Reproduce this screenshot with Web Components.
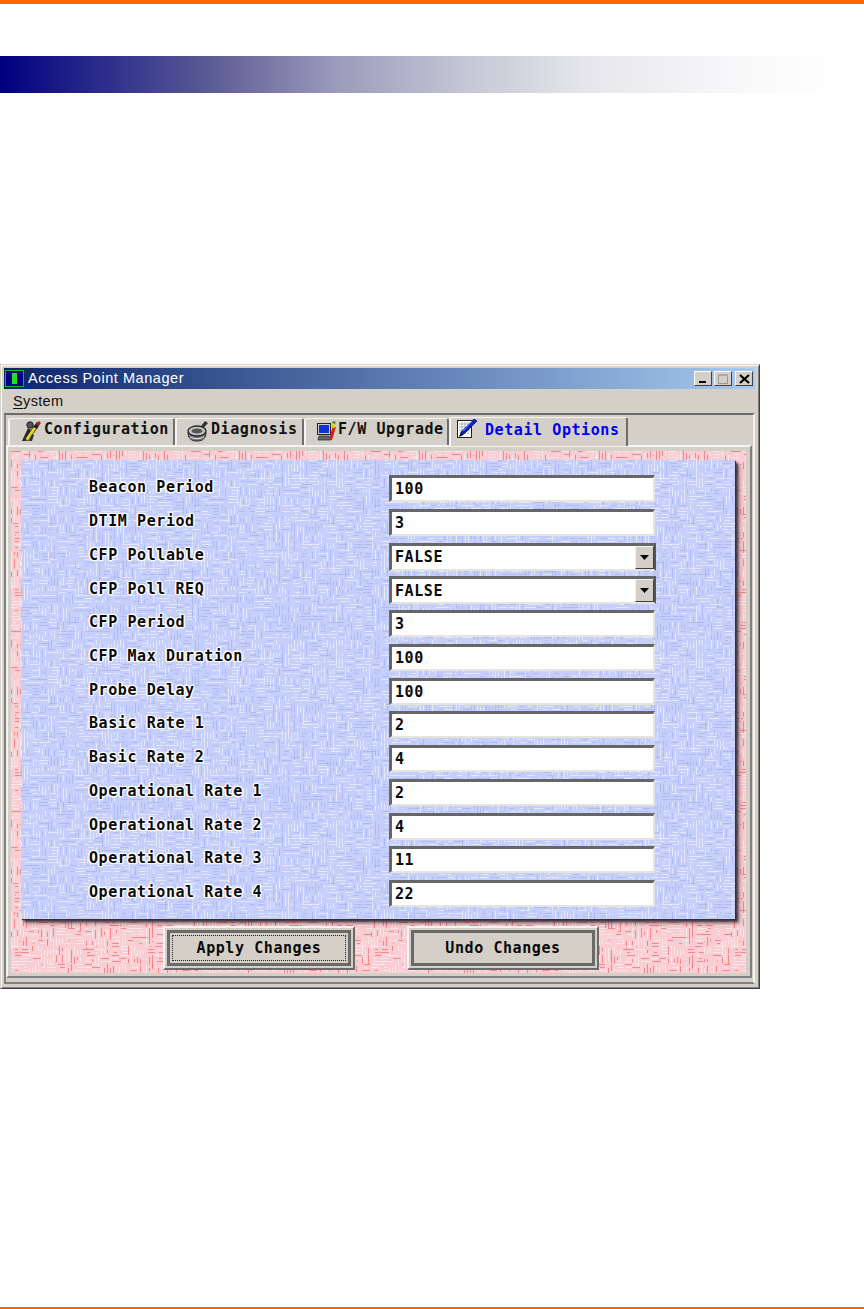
<!DOCTYPE html>
<html><head><meta charset="utf-8">
<style>
html,body{margin:0;padding:0;background:#fff}
</style></head><body>
<ap-page>
  <ap-window title="Access Point Manager">
    <ap-tab slot="tabs" icon="config" w="167">Configuration</ap-tab>
    <ap-tab slot="tabs" icon="diag" w="129">Diagnosis</ap-tab>
    <ap-tab slot="tabs" icon="fw" w="145">F/W Upgrade</ap-tab>
    <ap-tab slot="tabs" icon="detail" w="179" active>Detail Options</ap-tab>
    <ap-panel>
      <ap-field label="Beacon Period" value="100"></ap-field>
      <ap-field label="DTIM Period" value="3"></ap-field>
      <ap-field label="CFP Pollable" value="FALSE" select></ap-field>
      <ap-field label="CFP Poll REQ" value="FALSE" select></ap-field>
      <ap-field label="CFP Period" value="3"></ap-field>
      <ap-field label="CFP Max Duration" value="100"></ap-field>
      <ap-field label="Probe Delay" value="100"></ap-field>
      <ap-field label="Basic Rate 1" value="2"></ap-field>
      <ap-field label="Basic Rate 2" value="4"></ap-field>
      <ap-field label="Operational Rate 1" value="2"></ap-field>
      <ap-field label="Operational Rate 2" value="4"></ap-field>
      <ap-field label="Operational Rate 3" value="11"></ap-field>
      <ap-field label="Operational Rate 4" value="22"></ap-field>
      <ap-button slot="actions" focused>Apply Changes</ap-button>
      <ap-button slot="actions">Undo Changes</ap-button>
    </ap-panel>
  </ap-window>
</ap-page>
<script>
const MONO='"DejaVu Sans Mono","Liberation Mono",monospace';
// Deterministic irregular weave texture tile as vector SVG
function tile(base,light,dark,seed,dOp,lOp){
  let s=seed,r=()=>{s=(s*1664525+1013904223)%4294967296;return s/4294967296},p='';
  const N=180,C=9;
  for(let cy=0;cy<N;cy+=C)for(let cx=0;cx<N;cx+=C){
    const h=r()<.5;
    for(let i=0;i<C;i+=3){
      const a=Math.floor(r()*3)*2,b=C-Math.floor(r()*3)*2+(r()<.4?3:0);
      const c=r()<.6?light:dark,o=c===light?lOp:dOp;
      if(h)p+=`<path d='M${cx+a} ${cy+i}.5H${cx+b}' stroke='${c}' stroke-opacity='${o}'/>`;
      else p+=`<path d='M${cx+i}.5 ${cy+a}V${cy+b}' stroke='${c}' stroke-opacity='${o}'/>`;
    }
  }
  const svg=`<svg xmlns='http://www.w3.org/2000/svg' width='${N}' height='${N}'><rect width='${N}' height='${N}' fill='${base}'/>${p}</svg>`;
  return `url("data:image/svg+xml,${encodeURIComponent(svg)}")`;
}
document.documentElement.style.setProperty('--tex-blue',tile('#c6cefa','#eef0fd','#9fa9f0',7,.55,.75));
document.documentElement.style.setProperty('--tex-pink',tile('#f9cdd1','#f6f0f0','#f26a72',11,.7,.8));

const ICONS={
 config:`<svg width="22" height="22" viewBox="0 0 22 22"><path d="M2 21L8 8l3 2-5 11z" fill="#2a2a2a"/><path d="M5 19l9-13 3 2-9 13z" fill="#e8d820" stroke="#222" stroke-width=".8"/><path d="M13 7l4-5 3 2-3 5z" fill="#222"/><path d="M16 4l3-3 2 2-3 3z" fill="#b02020"/><circle cx="10" cy="5" r="3.2" fill="#555" stroke="#222"/><path d="M9 21l3-7 2 1-2 6z" fill="#333"/></svg>`,
 diag:`<svg width="22" height="22" viewBox="0 0 22 22"><path d="M11 10L18 1l3 2-7 8z" fill="#333"/><path d="M1 12c0 6 3 9 9 9s9-3 9-9z" fill="#777" stroke="#222"/><ellipse cx="10" cy="11" rx="9" ry="5" fill="#c4c4c4" stroke="#222" stroke-width="1.3"/><ellipse cx="10" cy="11" rx="5.5" ry="2.6" fill="#555"/><path d="M3 17c4 2.2 10 2.2 14 0" stroke="#e8e8e8" fill="none"/></svg>`,
 fw:`<svg width="22" height="22" viewBox="0 0 22 22"><rect x="1.5" y="3.5" width="13" height="11" fill="#ccc" stroke="#222"/><rect x="3" y="5" width="10" height="8" fill="#1030d0"/><path d="M3 16h10l2 4H2z" fill="#666" stroke="#222" stroke-width=".7"/><path d="M13 19l4-13 3 1-4 13z" fill="#d02020"/><path d="M15 7l2-4 3 1-1 4z" fill="#e0d020"/><path d="M16 3l1-2 3 1-1 2z" fill="#20a030"/></svg>`,
 detail:`<svg width="22" height="22" viewBox="0 0 22 22"><rect x="1.5" y="2.5" width="14" height="17" fill="#fff" stroke="#222"/><path d="M3 6h11M3 9h11M3 12h11M6 4v12M9 4v12M12 4v12" stroke="#999" stroke-width=".7"/><path d="M4 18l1-4L18 1l3 2L8 16z" fill="#1020d8" stroke="#000040" stroke-width=".7"/><path d="M7 13l9-10" stroke="#80a0ff"/><path d="M3 19l2-4 2 2z" fill="#000"/></svg>`
};

class Base extends HTMLElement{
  render(css,html){this.attachShadow({mode:'open'}).innerHTML=`<style>${css}</style>${html}`}
}
class ApPage extends Base{constructor(){super();this.render(`
  :host{display:flex;flex-direction:column;width:864px;height:1309px;box-sizing:border-box;background:#fff}
  .top{height:4px;background:#ff6600;flex:none}
  .band{height:37px;margin-top:52px;flex:none;background:linear-gradient(90deg,#000080 0,#5a5a95 24%,#9b9bbb 39%,#c6c6d6 54%,#e6e6ec 68%,#f7f7f9 84%,#fff 97%)}
  .main{flex:1;padding-top:271px}
  .foot{height:2px;background:#ff6600;flex:none}
`,`<div class="top"></div><div class="band"></div><div class="main"><slot></slot></div><div class="foot"></div>`)}}

class ApWindow extends Base{constructor(){super();this.render(`
  :host{display:block;width:760px;height:625px;box-sizing:border-box;background:#d4d0c8;
    border:1px solid;border-color:#d4d0c8 #404040 #404040 #d4d0c8;padding:3px 4px 3px 3px;
    box-shadow:inset 1px 1px 0 #fff,inset -1px -1px 0 #808080;font-family:"Liberation Sans",sans-serif}
  .title{height:21px;display:flex;align-items:center;background:linear-gradient(90deg,#0a246a,#a6caf0);color:#fff;
    font-size:14.5px;letter-spacing:.55px;padding-left:1px;box-sizing:border-box}
  .app{width:19px;height:17px;margin-right:4px;background:#000080;border:1.5px solid #00c020;box-sizing:border-box;display:flex;justify-content:center;align-items:center;flex:none}
  .app i{display:block;width:5px;height:11px;background:#20e020}
  .title span{flex:1;margin-top:-2px}
  .ctl{display:flex;align-items:center;padding-right:2px}
  .ctl b{width:18px;height:15px;background:#d4d0c8;box-sizing:border-box;border:1px solid;border-color:#fff #404040 #404040 #fff;display:flex;align-items:center;justify-content:center}
  .ctl b+b{margin-left:2px}
  .ctl b:nth-child(3){margin-left:3px}
  .menu{height:24px;display:flex;align-items:center;padding-left:9px;font-size:14.5px;letter-spacing:.35px;color:#111}
  .menu u{text-decoration-thickness:1px;text-underline-offset:2px}
  .frame{height:571px;box-sizing:border-box;border-top:2px solid #6c6c6c;border-left:2px solid #808080;border-right:2px solid #f4f3ef;border-bottom:2px solid #808080;display:flex;flex-direction:column}
  .tabs{height:30px;display:flex;align-items:flex-end;padding-left:2px;flex:none}
  .page{flex:1;box-sizing:border-box;border-top:2px solid #f4f3ef;border-left:2px solid #f4f3ef;border-right:2px solid #808080;border-bottom:2px solid #808080;padding:4px 4px 3px 3px;margin-right:1px;display:flex;margin-left:0;margin-bottom:4px}
`,`<div class="title"><div class="app"><i></i></div><span></span><div class="ctl">
   <b><svg width="10" height="10"><rect x="1" y="7" width="7" height="2" fill="#000"/></svg></b>
   <b><svg width="10" height="10"><rect x="0.5" y="0.5" width="9" height="9" fill="none" stroke="#999"/><rect x="0" y="0" width="10" height="2" fill="#aaa"/></svg></b>
   <b><svg width="11" height="10"><path d="M1 1l9 8M10 1l-9 8" stroke="#000" stroke-width="2.2"/></svg></b></div></div>
  <div class="menu"><span><u>S</u>ystem</span></div>
  <div class="frame"><div class="tabs"><slot name="tabs"></slot></div><div class="page"><slot></slot></div></div>`);
  this.shadowRoot.querySelector('.title span').textContent=this.getAttribute('title');
  this.removeAttribute('title');
}}

class ApTab extends Base{constructor(){super();const a=this.hasAttribute('active'),k=this.getAttribute('icon'),w=this.getAttribute('w');this.render(`
  :host{display:flex;align-items:center;box-sizing:border-box;width:${w}px;height:${a?29:27}px;background:#d4d0c8;
    border-top:1px solid #f4f3ef;border-left:2px solid #f4f3ef;border-right:2px solid #6c6c6c;border-radius:3px 3px 0 0;
    font:bold 15px ${MONO};letter-spacing:.58px;color:${a?'#0000f0':'#111'};white-space:nowrap;
    padding:0 0 ${a?5:6}px ${k==='detail'?5:10}px;${a?'position:relative;margin-bottom:-1px;z-index:1':''}}
  .i{flex:none;width:22px;height:22px;margin-right:${k==='detail'?7:k==='fw'?0:2}px;margin-top:${k==='detail'?-2:4}px}
`,`<span class="i">${ICONS[k]}</span><slot></slot>`)}}

class ApPanel extends Base{constructor(){super();this.render(`
  :host{display:flex;flex-direction:column;flex:1;box-sizing:border-box;background:var(--tex-pink);padding:9px 11px 2px 10px;position:relative}
  .blue{flex:none;height:459px;box-sizing:border-box;background:var(--tex-blue);padding:15px 0 0 0;
    box-shadow:1px 1px 1px #333,3px 3px 2px rgba(50,50,60,.85),5px 5px 4px rgba(70,30,40,.4);display:grid;grid-template-columns:1fr;grid-auto-rows:27px;row-gap:6.75px;align-content:start}
  .act{display:flex;gap:52px;padding:7px 0 0 142px}
`,`<div class="blue"><slot></slot></div><div class="act"><slot name="actions"></slot></div>`)}}

class ApField extends Base{constructor(){super();const sel=this.hasAttribute('select');this.render(`
  :host{display:grid;grid-template-columns:368px 267px;align-items:center;font:bold 15px ${MONO};letter-spacing:.58px;color:#0a0a0a}
  .l{padding-left:68px;white-space:nowrap;margin-top:-3px;text-shadow:1px 0 1px #fff,-1px 0 1px #fff,0 1px 1px #fff,0 -1px 1px #fff,1px 1px 1px #fff,-1px -1px 1px #fff,1px -1px 1px #fff,-1px 1px 1px #fff,1px 0 1px #fff,-1px 0 1px #fff}
  .v{height:27px;box-sizing:border-box;width:266px;background:#fff;border-style:solid;border-width:3px 2px 2px 3px;border-color:#666 #e6e4de #e6e4de #666;padding-left:3px;display:flex;align-items:center;justify-content:space-between;overflow:hidden}
  .v.s{width:267px;height:28px;border-width:3px 2px 2px 3px;border-color:#666 #555 #e6e4de #666;padding-right:0}
  .arrow{width:19px;height:23px;flex:none;background:#d4d0c8;box-sizing:border-box;border:1px solid;border-color:#f4f3ef #404040 #404040 #f4f3ef;display:flex;align-items:center;justify-content:center}
`,`<div class="l"></div><div class="v ${sel?'s':''}"><span></span>${sel?'<div class="arrow"><svg width="9" height="5"><path d="M0 0h9L4.5 5z" fill="#000"/></svg></div>':''}</div>`);
  this.shadowRoot.querySelector('.l').textContent=this.getAttribute('label');
  this.shadowRoot.querySelector('.v span').textContent=this.getAttribute('value');
}}

class ApButton extends Base{constructor(){super();const f=this.hasAttribute('focused');this.render(`
  :host{display:block;box-sizing:border-box;width:192px;height:44px;background:#d4d0c8;border:2px solid;border-color:#f4f3ef #6a6a6a #6a6a6a #f4f3ef;padding:2px;font:bold 15px ${MONO};letter-spacing:.58px;color:#0a0a0a}
  .in{height:100%;box-sizing:border-box;border:3px solid #6a6a6a;display:flex;align-items:center;justify-content:center;padding:${f?'2px':'0'}}
  .fx{flex:1;align-self:stretch;display:flex;align-items:center;justify-content:center;${f?'outline:1px dotted #222;outline-offset:-1px':''}}
`,`<div class="in"><div class="fx"><slot></slot></div></div>`)}}

customElements.define('ap-page',ApPage);
customElements.define('ap-window',ApWindow);
customElements.define('ap-tab',ApTab);
customElements.define('ap-panel',ApPanel);
customElements.define('ap-field',ApField);
customElements.define('ap-button',ApButton);
</script>
</body></html>
